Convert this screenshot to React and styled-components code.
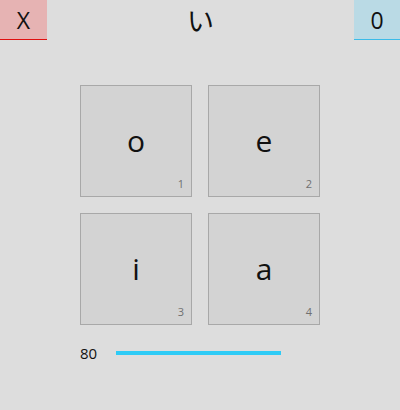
import React from 'react'
import styled, { createGlobalStyle } from 'styled-components'

const GlobalStyle = createGlobalStyle`
    html, body {
        margin: 0;
        padding: 0;
        background: #dddddd;
        font-family: "Open Sans", "Noto Sans", "Noto Sans CJK JP", sans-serif;
        color: #111;
    }
`

const Page = styled.div`
    width: 400px;
    height: 410px;
    background: #dddddd;
`

const TopBar = styled.header`
    display: flex;
    justify-content: space-between;
    align-items: stretch;
    height: 40px;
`

const CornerButton = styled.button`
    width: ${p => p.w}px;
    height: 40px;
    border: none;
    border-bottom: 1px solid ${p => p.line};
    background: ${p => p.bg};
    font-family: inherit;
    font-size: 23px;
    color: #111;
    padding: 0;
    cursor: pointer;
`

const Title = styled.h1`
    margin: 0;
    font-size: 27px;
    font-weight: 400;
    line-height: 40px;
    font-family: "Noto Sans CJK JP", sans-serif;
`

const Grid = styled.div`
    display: grid;
    grid-template-columns: repeat(2, 112px);
    gap: 16px;
    width: 240px;
    margin: 45px auto 0;
`

const Card = styled.div`
    position: relative;
    box-sizing: border-box;
    height: 112px;
    border: 1px solid #a8a8a8;
    background: #d3d3d3;
    display: flex;
    align-items: center;
    justify-content: center;
    font-size: 30px;
    padding-bottom: 2px;
`

const Key = styled.span`
    position: absolute;
    right: 7px;
    bottom: 5px;
    font-size: 11px;
    color: #707070;
`

const Progress = styled.div`
    display: flex;
    align-items: center;
    gap: 19px;
    margin: 18px 0 0 80px;
    font-size: 15px;
`

const Bar = styled.div`
    width: 165px;
    height: 4px;
    background: #2ecbf6;
`

const letters = ['o', 'e', 'i', 'a']

export default function App() {
    return (
        <Page>
            <GlobalStyle />
            <TopBar>
                <CornerButton w={47} bg="#e6b3b3" line="#e01010">X</CornerButton>
                <Title>い</Title>
                <CornerButton w={46} bg="#badae5" line="#3bbbe8">0</CornerButton>
            </TopBar>
            <Grid>
                {letters.map((l, i) => (
                    <Card key={l}>
                        {l}
                        <Key>{i + 1}</Key>
                    </Card>
                ))}
            </Grid>
            <Progress>
                <span>80</span>
                <Bar />
            </Progress>
        </Page>
    )
}
